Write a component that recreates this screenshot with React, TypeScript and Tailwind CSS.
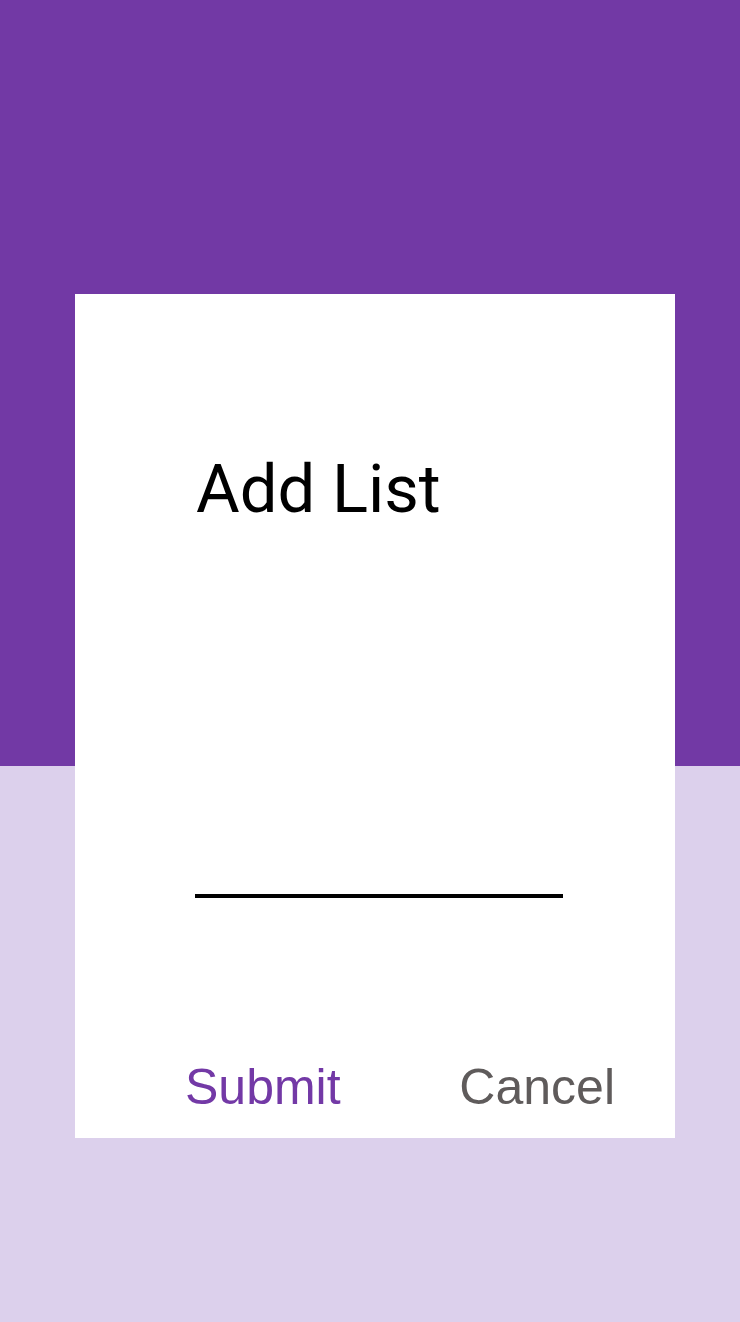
import React from 'react';

const App: React.FC = () => {
  return (
    <div className="relative w-full h-[1322px] flex flex-col overflow-hidden">
      {/* page background */}
      <div className="h-[766px] bg-[#7239a5]"></div>
      <div className="flex-1 bg-[#dcd0ec]"></div>

      {/* dialog */}
      <div className="absolute left-[75px] top-[294px] w-[600px] h-[844px] bg-white flex flex-col">
        <h2
          className="ml-[121px] mt-[162px] text-[67px] leading-none text-black"
          style={{ fontFamily: 'Roboto, "Noto Sans", sans-serif' }}
        >
          Add List
        </h2>
        <input
          type="text"
          className="ml-[120px] mt-[371px] w-[368px] h-[4px] bg-black border-0 outline-none"
          aria-label="List name"
        />
        <div
          className="mt-[164px] ml-[110px] mr-[60px] flex justify-between text-[50px] leading-none"
          style={{ fontFamily: '"Liberation Sans", Arial, sans-serif' }}
        >
          <button className="text-[#7339a6]">Submit</button>
          <button className="text-[#5f5b5b]">Cancel</button>
        </div>
      </div>
    </div>
  );
};

export default App;
